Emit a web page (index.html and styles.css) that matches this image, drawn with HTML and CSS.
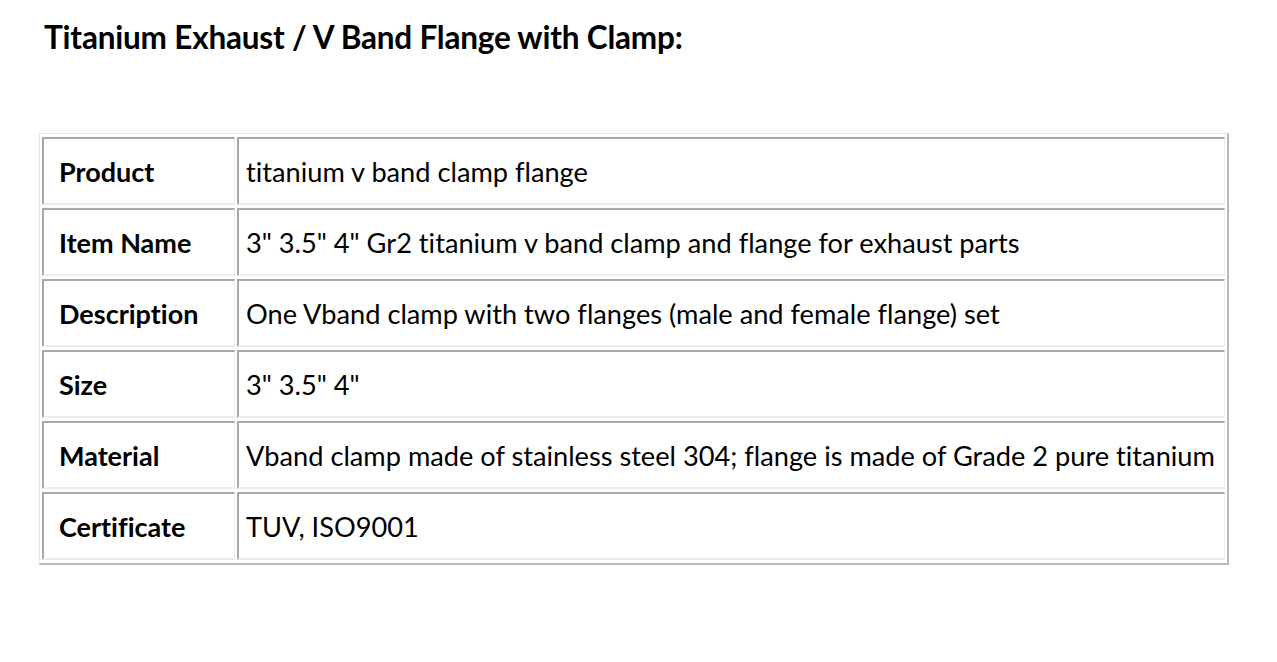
FILE: index.html
```html
<!DOCTYPE html>
<html>
<head>
<meta charset="utf-8">
<link rel="stylesheet" href="styles.css">
</head>
<body>
<h1 class="title">Titanium Exhaust / V Band Flange with Clamp:</h1>
<table class="spec">
  <tbody>
    <tr><td class="label">Product</td><td class="value">titanium v band clamp flange</td></tr>
    <tr><td class="label">Item Name</td><td class="value">3" 3.5" 4" Gr2 titanium v band clamp and flange for exhaust parts</td></tr>
    <tr><td class="label">Description</td><td class="value">One Vband clamp with two flanges (male and female flange) set</td></tr>
    <tr><td class="label">Size</td><td class="value">3" 3.5" 4"</td></tr>
    <tr><td class="label">Material</td><td class="value">Vband clamp made of stainless steel 304; flange is made of Grade 2 pure titanium</td></tr>
    <tr><td class="label">Certificate</td><td class="value">TUV, ISO9001</td></tr>
  </tbody>
</table>
</body>
</html>
```

FILE: styles.css
```css
html, body {
  margin: 0;
  padding: 0;
  background: #ffffff;
}
body {
  font-family: Lato, "Liberation Sans", sans-serif;
  color: #000;
  font-variant-ligatures: none;
}
.title {
  margin: 0;
  padding: 19px 0 0 44px;
  font-size: 31.5px;
  font-weight: 700;
  line-height: 36px;
  letter-spacing: -0.2px;
}
.spec {
  margin: 78px 0 0 39px;
  width: 1190px;
  border-collapse: separate;
  border-spacing: 2px 3px;
  border-style: solid;
  border-width: 1px 2px 2px 1px;
  border-color: #e8e8e8 #b8b8b8 #b8b8b8 #e8e8e8;
}
.spec td {
  height: 68px;
  box-sizing: border-box;
  border-style: solid;
  border-width: 2px 1px 2px 2px;
  border-color: #a8a8a8 #ececec #ececec #a8a8a8;
  font-size: 27px;
  line-height: 32px;
  vertical-align: middle;
  padding: 2px 0 0 0;
}
.spec .label {
  width: 193px;
  padding-left: 15px;
  font-weight: 700;
}
.spec .value {
  padding-left: 7px;
  font-size: 27.2px;
  font-weight: 400;
}
```
